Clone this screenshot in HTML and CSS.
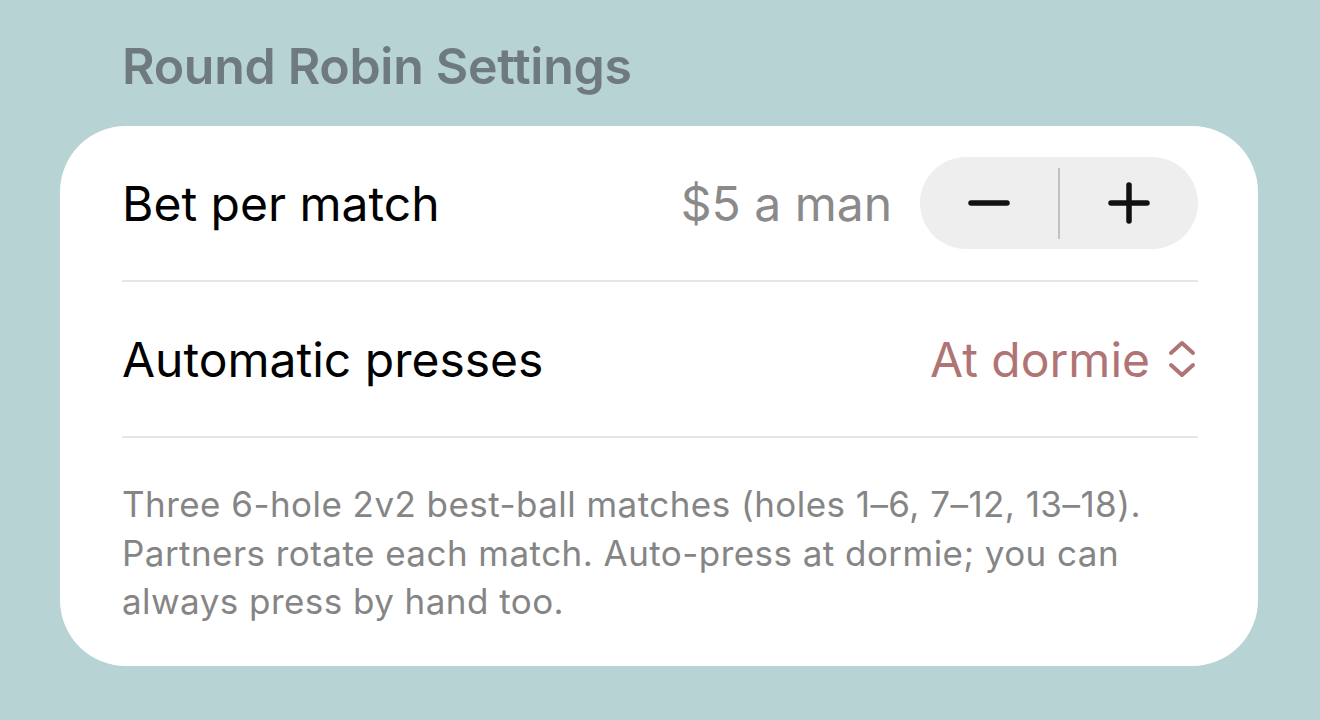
FILE: index.html
```html
<!DOCTYPE html>
<html>
<head>
<meta charset="utf-8">
<link rel="stylesheet" href="styles.css">
</head>
<body>
<div class="page">
  <h1 class="title">Round Robin Settings</h1>
  <section class="card">
    <div class="row">
      <span class="label">Bet per match</span>
      <div class="right">
        <span class="value">$5 a man</span>
        <div class="stepper">
          <button class="step" aria-label="Decrease">
            <svg width="42" height="42" viewBox="0 0 42 42"><path d="M3 21H39" stroke="#111" stroke-width="5.5" stroke-linecap="round"/></svg>
          </button>
          <span class="sep"></span>
          <button class="step" aria-label="Increase">
            <svg width="42" height="42" viewBox="0 0 42 42"><path d="M3 21H39M21 3V39" stroke="#111" stroke-width="5.5" stroke-linecap="round"/></svg>
          </button>
        </div>
      </div>
    </div>
    <div class="row">
      <span class="label">Automatic presses</span>
      <div class="picker">
        <span class="pick-value">At dormie</span>
        <svg width="28" height="38" viewBox="0 0 28 38"><path d="M3 13L14 3L25 13M3 25L14 35L25 25" fill="none" stroke="#b07474" stroke-width="4" stroke-linecap="round" stroke-linejoin="round"/></svg>
      </div>
    </div>
    <p class="footer">Three 6-hole 2v2 best-ball matches (holes 1–6, 7–12, 13–18). Partners rotate each match. Auto-press at dormie; you can always press by hand too.</p>
  </section>
</div>
</body>
</html>
```
FILE: styles.css
```css
* { box-sizing: border-box; }
html, body {
  margin: 0;
  padding: 0;
  background: #b7d3d4;
  font-family: Inter, "Noto Sans", sans-serif;
}
.page {
  padding: 0 62px 0 60px;
}
.title {
  margin: 0;
  padding: 36px 0 0 62px;
  height: 126px;
  font-size: 50px;
  font-weight: 600;
  line-height: 60px;
  color: #6e7a7e;
  letter-spacing: -0.3px;
}
.card {
  background: #fff;
  border-radius: 66px;
  padding: 0 60px 0 62px;
  height: 540px;
}
.row {
  display: flex;
  align-items: center;
  justify-content: space-between;
  height: 156px;
  border-bottom: 2px solid #e6e6e6;
}
.label {
  font-size: 48px;
  color: #000;
  letter-spacing: 0;
}
.right {
  display: flex;
  align-items: center;
  gap: 28px;
}
.value {
  font-size: 48px;
  color: #8a8a8a;
}
.stepper {
  display: flex;
  align-items: center;
  width: 278px;
  height: 92px;
  border-radius: 46px;
  background: #eeeeee;
}
.step {
  flex: 1;
  height: 100%;
  border: 0;
  background: transparent;
  padding: 0;
  display: flex;
  align-items: center;
  justify-content: center;
}
.sep {
  width: 2px;
  height: 71px;
  background: #c2c2c2;
}
.picker {
  display: flex;
  align-items: center;
  gap: 18px;
  padding-right: 2px;
}
.pick-value {
  font-size: 48px;
  color: #b07474;
}
.footer {
  margin: 0;
  padding-top: 42px;
  font-size: 35px;
  line-height: 48.5px;
  color: #858585;
  letter-spacing: 0.45px;
}
```
